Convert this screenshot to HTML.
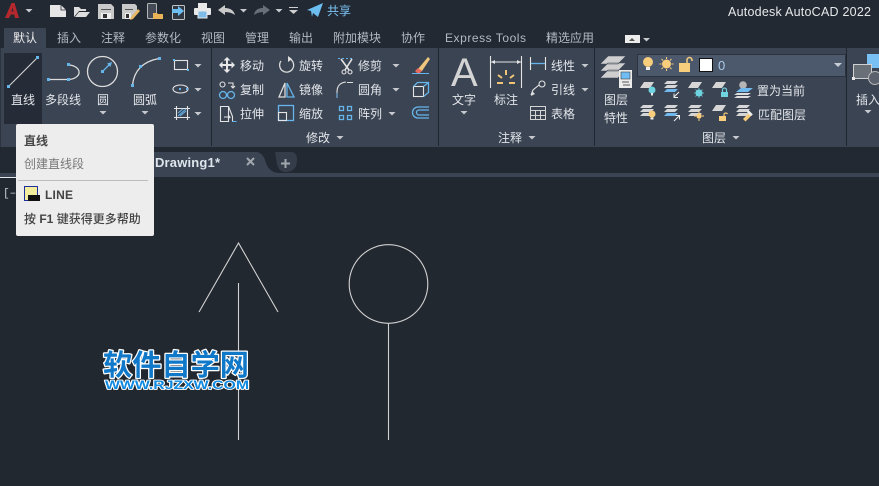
<!DOCTYPE html>
<html><head><meta charset="utf-8">
<style>
html,body{margin:0;padding:0;background:#222933;width:879px;height:486px;overflow:hidden}
svg{display:block}
text{font-family:"Liberation Sans","Noto Sans CJK SC",sans-serif;font-size:12px;fill:#e2e5e9}
.t{fill:#b4b9c1}
.g{fill:none;stroke:#dcdcdc;stroke-width:1.3}
.b{fill:none;stroke:#66b5ea;stroke-width:1.300}
.w{fill:none;stroke:#e4e4e4;stroke-width:1.100}
</style></head>
<body>
<svg width="879" height="486" viewBox="0 0 879 486" xmlns="http://www.w3.org/2000/svg">
<defs>
<path id="ar" d="M-3.500 0h7l-3.500 3.500z" fill="#c6c9ce"/>
<path id="para" d="M4 0h10l-4 6H0z" fill="#d6d6d6"/>
<path id="thin" d="M3 0h11l-3 3H0z" fill="#d6d6d6"/>
<path id="thinb" d="M3 0h11l-3 3H0z" fill="#6fb9ee"/>
</defs>
<rect width="879" height="486" fill="#222933"/>
<!-- ribbon -->
<rect x="0" y="48" width="879" height="99" fill="#3b4453"/>
<rect x="4" y="28" width="42" height="20" fill="#3b4453"/>
<rect x="0" y="48" width="1" height="99" fill="#2c333f"/>
<rect x="211" y="48" width="1" height="98" fill="#20262f"/>
<rect x="438" y="48" width="1" height="98" fill="#20262f"/>
<rect x="594" y="48" width="1" height="98" fill="#20262f"/>
<rect x="846" y="48" width="1" height="98" fill="#20262f"/>
<!-- tab strip -->
<rect x="0" y="173" width="879" height="4" fill="#3b4453"/>
<path d="M150 152H256Q262 152 265 160Q268 172 278 173H150z" fill="#3b4453"/>
<path d="M275 152H291Q297 152 297 160Q297 171 287 172H285Q279 172 277 164z" fill="#353d4a"/>
<rect x="0" y="177" width="879" height="309" fill="#222830"/>
<rect x="0" y="177" width="17" height="1" fill="#e8e8e8"/>
<!-- title bar -->
<path d="M5 18L11.500 3h3L19 18h-4l-.8-3.500h-3.400L9 18z M11.500 11.500h2l-1-4z" fill="#b5282e" fill-rule="evenodd"/>
<use href="#ar" x="29" y="9"/>
<path d="M50 5h11l5 5v7H50z" fill="#e6e6e6"/><path d="M61 5v5h5" fill="none" stroke="#222933" stroke-width=".8"/>
<path d="M74 17V7h5l2 2h5v2H79l-5 6zM75 17l4-5h11l-4 5z" fill="#ddd"/>
<path d="M98 4h13l3 3v12H98z" fill="#c9c9c9"/><rect x="101" y="9" width="10" height="1" fill="#555"/><rect x="101" y="13" width="10" height="6" fill="#eee"/><rect x="103" y="14" width="4" height="4" fill="#333"/>
<path d="M122 4h13l2 2v6l-6 7h-9z" fill="#c9c9c9"/><rect x="125" y="9" width="8" height="1" fill="#555"/><rect x="125" y="13" width="6" height="6" fill="#eee"/><rect x="126" y="14" width="3" height="4" fill="#333"/>
<path d="M131 17l7-8 2 2-7 8-3 1z" fill="#e8b866"/>
<rect x="147.500" y="3.500" width="9" height="15" rx="1" fill="#444b56" stroke="#b5b5b5"/>
<path d="M153 19v-6h4l1 1h5v5z" fill="#e9b458"/>
<rect x="172.500" y="5.500" width="12" height="14" rx="1" fill="#2f3742" stroke="#c2c2c2"/>
<path d="M172 9h6V6l6 5-6 5v-3h-6z" fill="#6cbdf0"/>
<rect x="198" y="3" width="9" height="5" fill="#e8e8e8"/><rect x="194" y="8" width="17" height="7" rx="1" fill="#e8e8e8"/><rect x="198" y="11" width="9" height="7" fill="#7fbce8" stroke="#e8e8e8"/>
<path d="M218 10l7-5v3q8 0 10 7q-4-3-10-3v3z" fill="#c9c9c9"/>
<use href="#ar" x="243.500" y="9"/>
<path d="M270 10l-7-5v3q-8 0-9 7q4-3 9-3v3z" fill="#6a6f77"/>
<use href="#ar" x="279" y="9"/>
<rect x="289" y="7" width="9" height="1" fill="#cfcfcf"/><path d="M289 10h9l-4.500 4z" fill="#cfcfcf"/>
<path d="M307 10l16-7-5 14-5-4-1 4-1-6z" fill="#6cbdf0"/>
<text x="327" y="15" style="fill:#7cc4f5">共享</text>
<text x="728" y="16" textLength="143" lengthAdjust="spacing" style="font-size:12.500px;fill:#e6e8ea">Autodesk AutoCAD 2022</text>
<!-- tabs -->
<text x="13" y="42" style="fill:#ececec">默认</text>
<text class="t" x="57" y="42">插入</text>
<text class="t" x="101" y="42">注释</text>
<text class="t" x="145" y="42">参数化</text>
<text class="t" x="201" y="42">视图</text>
<text class="t" x="245" y="42">管理</text>
<text class="t" x="289" y="42">输出</text>
<text class="t" x="333" y="42">附加模块</text>
<text class="t" x="401" y="42">协作</text>
<text class="t" x="445" y="42" textLength="81">Express Tools</text>
<text class="t" x="546" y="42">精选应用</text>
<rect x="625" y="35" width="15" height="8" fill="#ececec"/><path d="M629 41l3-3 3 3z" fill="#555"/>
<use href="#ar" x="646.500" y="38"/>
<!-- draw panel -->
<rect x="4" y="53" width="38" height="71" fill="#262c37"/>
<path d="M8.500 86.500L37.500 57.500" stroke="#d5d5d5" stroke-width="1.100"/>
<rect x="7" y="85" width="3" height="3" fill="#66b5ea"/><rect x="36" y="56" width="3" height="3" fill="#66b5ea"/>
<text x="11" y="104">直线</text>
<path d="M49 79.500H68M68 65A11 7.200 0 0 1 68 79.500" class="g"/>
<rect x="47" y="78" width="3" height="3" fill="#66b5ea"/><rect x="67" y="78" width="3" height="3" fill="#66b5ea"/><rect x="67" y="63" width="3" height="3" fill="#66b5ea"/>
<text x="45" y="104">多段线</text>
<circle cx="102.500" cy="71.500" r="15" class="g"/>
<path d="M102.500 71.500L110 64" class="b" stroke-width="1.500"/><path d="M112 62l-1.500 5-3.500-3.500z" fill="#66b5ea"/><rect x="101" y="70" width="3" height="3" fill="#66b5ea"/>
<text x="97" y="104">圆</text><use href="#ar" x="103" y="111"/>
<path d="M132.500 85Q135 63 159 58.500" class="g"/>
<rect x="131" y="84" width="3" height="3" fill="#66b5ea"/><rect x="139" y="65" width="3" height="3" fill="#66b5ea"/><rect x="158" y="57" width="3" height="3" fill="#66b5ea"/>
<text x="133" y="104">圆弧</text><use href="#ar" x="145" y="111"/>
<rect x="174.500" y="60.500" width="13" height="9" class="w"/><rect x="173" y="59" width="2" height="2" fill="#66b5ea"/><rect x="187" y="69" width="2" height="2" fill="#66b5ea"/>
<use href="#ar" x="198" y="64"/>
<ellipse cx="180.500" cy="89" rx="7.500" ry="4" class="w"/><rect x="179" y="88" width="2" height="2" fill="#66b5ea"/><rect x="186" y="88" width="2" height="2" fill="#66b5ea"/>
<use href="#ar" x="198" y="88"/>
<path d="M176.500 106V120M187.500 106V120M174 108.500H190M174 117.500H190" class="w"/>
<path d="M178 116l8-7M180 116l6-5M178 113l5-4" stroke="#66b5ea"/>
<use href="#ar" x="198" y="112"/>
<!-- modify -->
<path d="M227 57l3.500 3.500h-2.500v3.500h3.500v-2.500l3.500 3.500-3.500 3.500v-2.500h-3.500v3.500h2.500l-3.500 3.500-3.500-3.500h2.500v-3.500h-3.500v2.500l-3.500-3.500 3.500-3.500v2.500h3.500v-3.500h-2.500z" fill="#e8e8e8"/>
<text x="240" y="70">移动</text>
<path d="M290 59A7 7 0 1 1 281 61" class="g"/><path d="M288 56l4 3-4 3z" fill="#e0e0e0"/>
<text x="299" y="70">旋转</text>
<path d="M338 58.500h16" stroke="#66b5ea" stroke-dasharray="2 2"/><path d="M341 59l8 11M352 59l-7 11" stroke="#e4e4e4" stroke-width="1.600" fill="none"/><circle cx="344" cy="72" r="2" class="w"/><circle cx="350" cy="72" r="2" class="w"/>
<text x="358" y="70">修剪</text><use href="#ar" x="396" y="64"/>
<path d="M418 69L428 57l2 2-8 12z" fill="#efc67d"/><path d="M415 71l3-3 4 3-2 2h-3z" fill="#e86a5c"/><path d="M412 73.500H429" stroke="#66b5ea"/>
<circle cx="222.500" cy="84.500" r="2.500" class="w"/><path d="M228 83h5v5M231 86l2 2 2-2" class="w"/><circle cx="223" cy="95" r="3.500" class="b"/><circle cx="231" cy="95" r="3.500" class="b"/>
<text x="240" y="94">复制</text>
<path d="M285 83v14h-6z" class="g"/>
<path d="M287 83l7 14h-7z" class="b"/>
<text x="299" y="94">镜像</text>
<path d="M337 98V92Q337 83 346 82" class="w"/><path d="M337 93v5" stroke="#66b5ea"/><path d="M347 82.500h6" stroke="#ddd"/>
<text x="358" y="94">圆角</text><use href="#ar" x="396" y="88"/>
<rect x="413.500" y="86.500" width="10" height="10" class="w"/><path d="M413.500 86.500l4-4h11v10l-5 4M423.500 86.500l5-4" class="b"/>
<path d="M220.500 106.500h8v15h-8zM228.500 106.500l4 10v5" class="w"/><path d="M224 117h6l-2-2M230 117l-2 2" stroke="#e4e4e4" fill="none"/><path d="M232 121.500h4.500" stroke="#66b5ea"/>
<text x="240" y="118">拉伸</text>
<rect x="278.500" y="105.500" width="15" height="15" class="b"/><rect x="278.500" y="112.500" width="8" height="8" class="w"/>
<text x="299" y="118">缩放</text>
<path d="M339.500 106.500h4v4h-4zM347.500 106.500h4v4h-4zM339.500 115.500h4v4h-4zM347.500 115.500h4v4h-4z" class="b"/>
<text x="358" y="118">阵列</text><use href="#ar" x="392" y="112"/>
<path d="M429 107h-11a5.500 5.500 0 0 0 0 11h11M429 110h-10a2.500 2.500 0 0 0 0 5h10" class="b"/>
<text x="306" y="142">修改</text><use href="#ar" x="340" y="136"/>
<!-- annotation -->
<text x="451" y="86" style="font-size:40px;fill:#d4d4d4">A</text>
<text x="452" y="104">文字</text><use href="#ar" x="464" y="111"/>
<path d="M490.500 56v32M521.500 56v32M491 62h30" class="w"/><path d="M491 62l4-2v4zM521 62l-4-2v4z" fill="#e4e4e4"/>
<path d="M506 70v5M498 75l4 3M514 75l-4 3M497 83h6M509 83h6" stroke="#f0c676" stroke-width="2"/>
<text x="494" y="104">标注</text>
<path d="M530.500 57v13M545.500 57v13" class="w"/><path d="M531 63.500h14" class="b"/>
<text x="551" y="70">线性</text><use href="#ar" x="585" y="64"/>
<path d="M531 95l2-5 6-5" class="w"/><circle cx="542" cy="84" r="3" class="w"/><path d="M531 96l1-5 3 3z" fill="#ddd"/>
<text x="551" y="94">引线</text><use href="#ar" x="585" y="88"/>
<path d="M530.500 106.500h15v13h-15zM530.500 110.500h15M530.500 115.500h15M535.500 110.500v9M540.500 110.500v9" stroke="#d4d4d4" fill="none"/>
<text x="551" y="118">表格</text>
<text x="498" y="142">注释</text><use href="#ar" x="532" y="136"/>
<!-- layers -->
<path d="M608 56h18l-8 8h-18zM608 63h18l-8 8h-18zM608 70h18l-8 8h-18z" fill="#cfcfcf" stroke="#3b4453" stroke-width=".6"/>
<rect x="619" y="70" width="13" height="18" fill="#ececec"/><rect x="621" y="72" width="9" height="7" fill="#6fbdf2" stroke="#444" stroke-width=".6"/><path d="M622 82h7M623 85h7" stroke="#555"/>
<text x="604" y="104">图层</text><text x="604" y="122">特性</text>
<rect x="637.500" y="54.500" width="208" height="22" fill="#4c586b" stroke="#2c333f"/>
<circle cx="648" cy="62" r="5" fill="#f8cd7c"/><rect x="646" y="67" width="4" height="3" fill="#eee"/>
<circle cx="666.500" cy="64" r="4.500" fill="#f8cd7c"/><path d="M666.500 57v2M666.500 69v2M659.500 64h2M671.500 64h2M661.500 59l1.500 1.500M670 67.500l1.500 1.500M671.500 59l-1.500 1.500M663 67.500L661.500 69" stroke="#f8cd7c"/>
<rect x="679" y="63" width="11" height="9" fill="#f8cd7c"/><path d="M687 63v-3a2.500 2.500 0 0 1 5 0v1" fill="none" stroke="#f8cd7c" stroke-width="1.500"/>
<rect x="699.500" y="58.500" width="13" height="13" fill="#fff" stroke="#111"/>
<text x="718" y="70" style="fill:#a9cbe8;font-size:13px">0</text>
<path d="M834 63h8l-4 4z" fill="#c9ced5"/>
<!-- layer row 1 -->
<use href="#para" x="640" y="82"/><circle cx="652" cy="90" r="3.500" fill="#6fd3e0"/><rect x="651" y="93" width="2" height="2.500" fill="#eee"/>
<use href="#thin" x="664" y="81"/><use href="#thin" x="664" y="85"/><use href="#thinb" x="664" y="89"/><path d="M679 92l-5 5M674 93.500v4h4" stroke="#eee" fill="none"/>
<use href="#para" x="688" y="82"/><circle cx="699" cy="93" r="3.500" fill="#6fd3e0"/><path d="M699 88v10M694 93h10M695.500 89.500l7 7M702.500 89.500l-7 7" stroke="#6fd3e0" stroke-width=".8"/>
<use href="#para" x="712" y="82"/><rect x="721" y="92" width="7" height="5" fill="#6fd3e0"/><path d="M722.500 92v-2a2 2 0 0 1 4 0v2" fill="none" stroke="#6fd3e0" stroke-width="1.200"/>
<circle cx="743" cy="85" r="3.800" fill="#b5b5b5"/><path d="M741 88h12l-5 4h-12z" fill="#6fb9ee"/><path d="M737 93h14l-3 2h-14zM737 96h14l-3 2h-14z" fill="#ddd"/>
<text x="757" y="95">置为当前</text>
<!-- layer row 2 -->
<use href="#thin" x="640" y="105"/><use href="#thin" x="640" y="109"/><use href="#thin" x="640" y="113"/><circle cx="652" cy="114" r="3.500" fill="#f8cd7c"/><rect x="650.500" y="117.500" width="3" height="2" fill="#eee"/>
<use href="#thin" x="664" y="105"/><use href="#thin" x="664" y="109"/><use href="#thinb" x="664" y="113"/><path d="M674 121l5-5M675.500 115.500h4v4" stroke="#eee" fill="none"/>
<use href="#thin" x="688" y="105"/><use href="#thin" x="688" y="109"/><use href="#thin" x="688" y="113"/><circle cx="699" cy="116" r="2.700" fill="#f8cd7c"/><path d="M699 111v2M699 119v2M694 116h2M702 116h2" stroke="#f8cd7c"/>
<use href="#para" x="712" y="105"/><rect x="719" y="116" width="7" height="5" fill="#f8cd7c"/><path d="M724 116v-2a2 2 0 0 1 3.500 0" fill="none" stroke="#f8cd7c" stroke-width="1.200"/>
<use href="#thin" x="736" y="105"/><use href="#thin" x="736" y="109"/><use href="#thin" x="736" y="113"/><path d="M743 119l6-6 2.500 2.500-6 6z" fill="#f8cd7c"/><rect x="747" y="112" width="6" height="2.500" fill="#eee" transform="rotate(45 750 113)"/>
<text x="758" y="119">匹配图层</text>
<text x="702" y="142">图层</text><use href="#ar" x="736" y="136"/>
<!-- insert -->
<rect x="867" y="54" width="12" height="14" fill="#79c0f5"/>
<rect x="853.500" y="64.500" width="18" height="14" fill="#6a7078" stroke="#d0d0d0"/>
<rect x="852" y="77" width="3" height="3" fill="#e6e6e6"/>
<circle cx="875" cy="78" r="6.500" fill="#5b626d" stroke="#b8b8b8"/>
<text x="856" y="104">插入</text><use href="#ar" x="868" y="110"/>
<!-- tab -->
<text x="155" y="167" textLength="65" style="font-weight:bold;font-size:13px;fill:#dfe5ec">Drawing1*</text>
<path d="M247 158l7 7M254 158l-7 7" stroke="#a2a7ae" stroke-width="2"/>
<path d="M285.500 159v9M281 163.500h9" stroke="#a2a7ae" stroke-width="2"/>
<text x="3" y="196" style="font-family:'Liberation Mono',monospace;font-size:11px;fill:#c9ced5">[–</text>
<!-- drawing -->
<g stroke="#d2d2d2" stroke-width="1.100" fill="none">
<path d="M199 312L238.500 243L278 312"/>
<path d="M238.500 283V440"/>
<circle cx="388.500" cy="284" r="39.300"/>
<path d="M388.500 323V440"/>
</g>
<!-- watermark -->
<text x="103" y="375" textLength="146" lengthAdjust="spacingAndGlyphs" stroke="#fff" stroke-width="2.500" stroke-linejoin="round" paint-order="stroke" style="font-size:29px;font-weight:bold;fill:#0f78c8">软件自学网</text>
<text x="105" y="389" textLength="144" lengthAdjust="spacingAndGlyphs" stroke="#fff" stroke-width="1.800" stroke-linejoin="round" paint-order="stroke" style="font-size:12px;font-weight:bold;fill:#0f8ae0">WWW.RJZXW.COM</text>
<!-- tooltip -->
<rect x="16" y="124" width="138" height="112" rx="2" fill="#ededed"/>
<text x="24" y="145" style="fill:#484848;font-weight:bold">直线</text>
<text x="24" y="168" style="fill:#777">创建直线段</text>
<rect x="18" y="180" width="130" height="1" fill="#bcbcbc"/>
<rect x="24.500" y="186.500" width="13" height="14" fill="#f2ee9e" stroke="#1f2f9e"/>
<rect x="28" y="195" width="12" height="6" fill="#111"/>
<text x="45" y="199" textLength="28" style="fill:#444;font-weight:bold">LINE</text>
<text x="24" y="223" style="fill:#444;font-weight:500">按 <tspan style="font-weight:bold">F1</tspan> 键获得更多帮助</text>
</svg>
</body></html>
